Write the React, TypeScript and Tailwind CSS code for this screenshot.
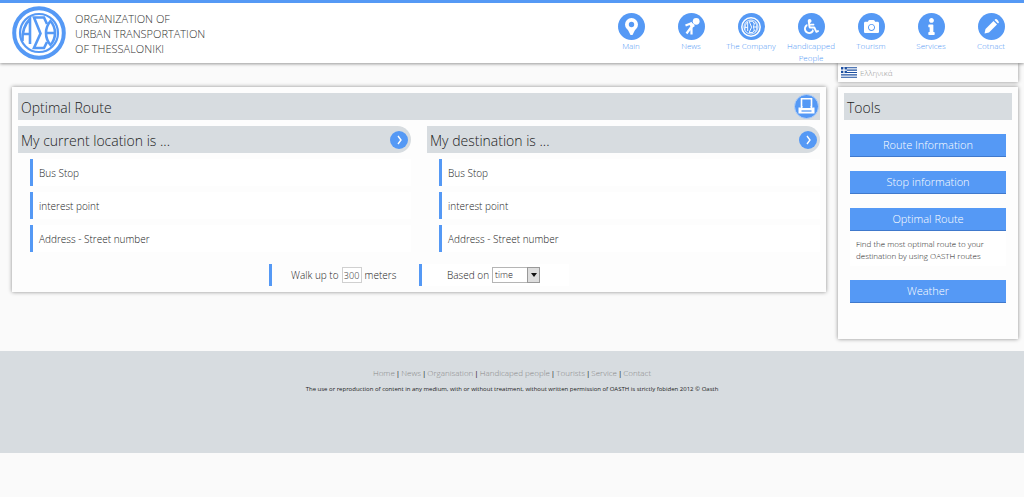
import { useState, type ReactNode } from "react";
import { FaCamera, FaInfo, FaWheelchair } from "react-icons/fa";

function LogoMark({ className }: { className?: string }) {
  return (
    <svg viewBox="0 0 54 54" className={className} fill="none" stroke="currentColor" aria-hidden="true">
      <circle cx="27" cy="27" r="24.8" strokeWidth="4" />
      <circle cx="27" cy="27" r="19" strokeWidth="2.2" />
      <g strokeWidth="2.6">
        <path d="M10.5 35 C10 26 12 19 18 13 V38 M10.5 28 H18" />
        <path d="M35 18 L32 11.500 H22 L28.500 27.500 L22 42 H32 L35 36" />
        <path d="M38.500 15 C32.500 22 32.500 32 38.500 39 C44.500 32 44.500 22 38.500 15 Z M34 27 H43" />
      </g>
    </svg>
  );
}

function PinIcon() {
  return (
    <svg viewBox="0 0 27 27" className="h-full w-full" fill="none" aria-hidden="true">
      <circle cx="13.5" cy="11.5" r="4.6" stroke="#fff" strokeWidth="3.8" />
      <path d="M9.5 16 H17.5 L14.5 22 H12.5 Z" fill="#fff" />
    </svg>
  );
}

function MicIcon() {
  return (
    <svg viewBox="0 0 27 27" className="h-full w-full" aria-hidden="true">
      <circle cx="18.2" cy="8.300" r="3.400" fill="#fff" />
      <path
        d="M7.500 12.500 L14 10 M15.500 11 L8.500 20.500 M13.500 12 V21.500"
        fill="none"
        stroke="#fff"
        strokeWidth="2.200"
      />
      <path d="M13 9 L17 13 L14 15 L11.500 12 Z" fill="#fff" />
    </svg>
  );
}

function PencilIcon() {
  return (
    <svg viewBox="0 0 27 27" className="h-full w-full" fill="#fff" aria-hidden="true">
      <path d="M6.500 20.500 L7.500 16 L15.500 8 L19 11.500 L11 19.500 Z" />
      <path d="M16.500 7 L17.500 6 Q19.500 5.500 21 9.500 L20 10.500 Z" />
    </svg>
  );
}

const navItems: { label: string; icon: ReactNode }[] = [
  { label: "Main", icon: <PinIcon /> },
  { label: "News", icon: <MicIcon /> },
  { label: "The Company", icon: <LogoMark className="h-5 w-5 text-white" /> },
  { label: "Handicapped People", icon: <FaWheelchair size={15} /> },
  { label: "Tourism", icon: <FaCamera size={15} /> },
  { label: "Services", icon: <FaInfo size={17} /> },
  { label: "Cotnact", icon: <PencilIcon /> },
];

const footerLinks = ["Home", "News", "Organisation", "Handicaped people", "Tourists", "Service", "Contact"];

const options = ["Bus Stop", "interest point", "Address - Street number"];

function Header() {
  return (
    <header className="relative z-10 flex h-[63px] justify-between border-t-3 border-[#5599f5] bg-white shadow-[0_1px_3px_rgba(0,0,0,0.4)]">
      <a href="#" className="flex items-center gap-[9px] pl-3 text-[#333]">
        <LogoMark className="h-[54px] w-[54px] text-[#5599f5]" />
        <span className="text-[11px] leading-[15px]">
          ORGANIZATION OF
          <br />
          URBAN TRANSPORTATION
          <br />
          OF THESSALONIKI
        </span>
      </a>
      <nav className="flex pt-[10px] pr-[3px]">
        {navItems.map(item => (
          <a
            key={item.label}
            href="#"
            className="flex w-[60px] flex-col items-center text-center text-[8px] leading-3 text-[#5599f5]"
          >
            <span className="flex h-[27px] w-[27px] shrink-0 items-center justify-center rounded-full bg-[#5599f5] text-white">
              {item.icon}
            </span>
            {item.label}
          </a>
        ))}
      </nav>
    </header>
  );
}

function LocationColumn({ title }: { title: string }) {
  const [selected, setSelected] = useState("");

  return (
    <section className="flex-1">
      <div className="flex h-[27px] items-center justify-between rounded-r-full bg-[#d7dce0] pr-[3px] pl-[3px]">
        <h2 className="pt-[2px] text-sm">{title}</h2>
        <button
          className="flex h-[18px] w-[18px] items-center justify-center rounded-full bg-[#5599f5]"
          aria-label={title}
        >
          <svg viewBox="0 0 18 18" className="h-full w-full" fill="none" stroke="#fff" strokeWidth="1.4" aria-hidden="true">
            <path d="M8 5 L11 9 L8 13" />
          </svg>
        </button>
      </div>
      <div className="mt-[6px] flex flex-col gap-[6px] pl-3">
        {options.map(option => (
          <button
            key={option}
            onClick={() => setSelected(option)}
            aria-pressed={selected === option}
            className="h-[27px] border-l-3 border-[#5599f5] bg-white pt-px pl-[6px] text-left text-[10px]"
          >
            {option}
          </button>
        ))}
      </div>
    </section>
  );
}

function RoutePanel() {
  return (
    <main className="mt-6 flex-1 self-start bg-[#fdfdfd] p-[6px] shadow-[0_0_4px_rgba(0,0,0,0.45)]">
      <div className="flex h-[27px] items-center justify-between bg-[#d7dce0] pr-px pl-[3px]">
        <h1 className="pt-[2px] text-sm">Optimal Route</h1>
        <button
          className="h-[25px] w-[25px] rounded-full border border-[#b5d0f5] bg-[#5599f5]"
          aria-label="Print"
        >
          <svg viewBox="0 0 23 23" className="h-full w-full" fill="none" aria-hidden="true">
            <path d="M6.500 12 V3.700 H16.500 V12" stroke="#fff" strokeWidth="1.600" />
            <path d="M3.500 12.500 H6 V11 H7.500 V13 H15.500 V11 H17 V12.500 H19.500 V18.500 H3.500 Z" fill="#fff" />
            <path d="M6.500 16 H16.500" stroke="#5599f5" strokeWidth="1.300" />
          </svg>
        </button>
      </div>
      <div className="mt-[6px] flex gap-4">
        <LocationColumn title="My current location is ..." />
        <LocationColumn title="My destination is ..." />
      </div>
      <div className="mt-3 flex justify-center text-[10px]">
        <div className="flex h-[22px] w-[150px] items-center gap-[3px] border-l-3 border-[#5599f5] pl-[19px]">
          <label htmlFor="walk">Walk up to</label>
          <input
            id="walk"
            defaultValue="300"
            className="h-4 w-5 border border-[#d0d0d0] bg-white text-center text-[9px]"
          />
          <span>meters</span>
        </div>
        <div className="flex h-[22px] w-[150px] items-center gap-[3px] border-l-3 border-[#5599f5] bg-white pl-[25px]">
          <label htmlFor="based">Based on</label>
          <div className="relative flex">
            <select
              id="based"
              className="h-4 w-12 appearance-none border border-[#b5b5b5] bg-white pl-[2px] text-[9px] leading-3"
            >
              <option>time</option>
              <option>distance</option>
            </select>
            <span className="pointer-events-none absolute inset-y-0 right-0 flex w-[13px] items-center justify-center border border-[#999] bg-[#ddd]">
              <svg viewBox="0 0 6 4" className="h-1 w-[6px]" aria-hidden="true">
                <path d="M0 0 H6 L3 4 Z" fill="#111" />
              </svg>
            </span>
          </div>
        </div>
      </div>
    </main>
  );
}

function ToolButton({ children }: { children: string }) {
  return (
    <button className="block h-[23px] w-full border-b border-[#4079cc] bg-[#5599f5] text-[11px] leading-5 text-white">
      {children}
    </button>
  );
}

function Sidebar() {
  return (
    <aside className="flex w-[180px] shrink-0 flex-col gap-[5px]">
      <a
        href="#"
        className="flex h-[19px] items-center gap-[3px] bg-[#fdfdfd] pl-[3px] text-[8px] text-[#999] shadow-[0_0_4px_rgba(0,0,0,0.45)]"
      >
        <svg viewBox="0 0 27 18" className="h-[11px] w-4" aria-hidden="true">
          <path d="M0 0 H27 V18 H0 Z" fill="#fff" />
          <path
            d="M0 1 H27 M0 5 H27 M0 9 H27 M0 13 H27 M0 17 H27"
            stroke="#1c4fa0"
            strokeWidth="2"
          />
          <path d="M0 0 H10 V10 H0 Z" fill="#1c4fa0" />
          <path d="M5 0 V10 M0 5 H10" stroke="#fff" strokeWidth="2" />
        </svg>
        Ελληνικά
      </a>
      <section className="bg-[#fdfdfd] p-[6px] pb-9 shadow-[0_0_4px_rgba(0,0,0,0.45)]">
        <h2 className="flex h-[27px] items-center bg-[#d7dce0] pt-[2px] pl-[3px] text-sm">Tools</h2>
        <div className="mt-[14px] flex flex-col gap-[14px] px-[6px]">
          <ToolButton>Route Information</ToolButton>
          <ToolButton>Stop information</ToolButton>
          <div>
            <ToolButton>Optimal Route</ToolButton>
            <p className="bg-white px-[6px] pt-[7px] pb-1 text-[8px] leading-3">
              Find the most optimal route to your destination by using OASTH routes
            </p>
          </div>
          <ToolButton>Weather</ToolButton>
        </div>
      </section>
    </aside>
  );
}

function Footer() {
  return (
    <footer className="mt-3 h-[102px] bg-[#d7dce0] pt-4 text-center">
      <div className="flex justify-center text-[8px] leading-3">
        {footerLinks.map((link, i) => (
          <span key={link}>
            {i > 0 && <span className="px-px font-normal">|</span>}
            <a href="#" className="text-[#888]">
              {link}
            </a>
          </span>
        ))}
      </div>
      <p className="mt-1 text-[6px] leading-3 font-normal">
        The use or reproduction of content in any medium, with or without treatment, without written permission of OASTH
        is strictly fobiden 2012 © Oasth
      </p>
    </footer>
  );
}

export default function App() {
  return (
    <div className="min-h-screen bg-[#fafafa] font-['Open_Sans','Noto_Sans',sans-serif] font-light text-[#222]">
      <Header />
      <div className="flex gap-3 pr-[6px] pl-3">
        <RoutePanel />
        <Sidebar />
      </div>
      <Footer />
    </div>
  );
}
